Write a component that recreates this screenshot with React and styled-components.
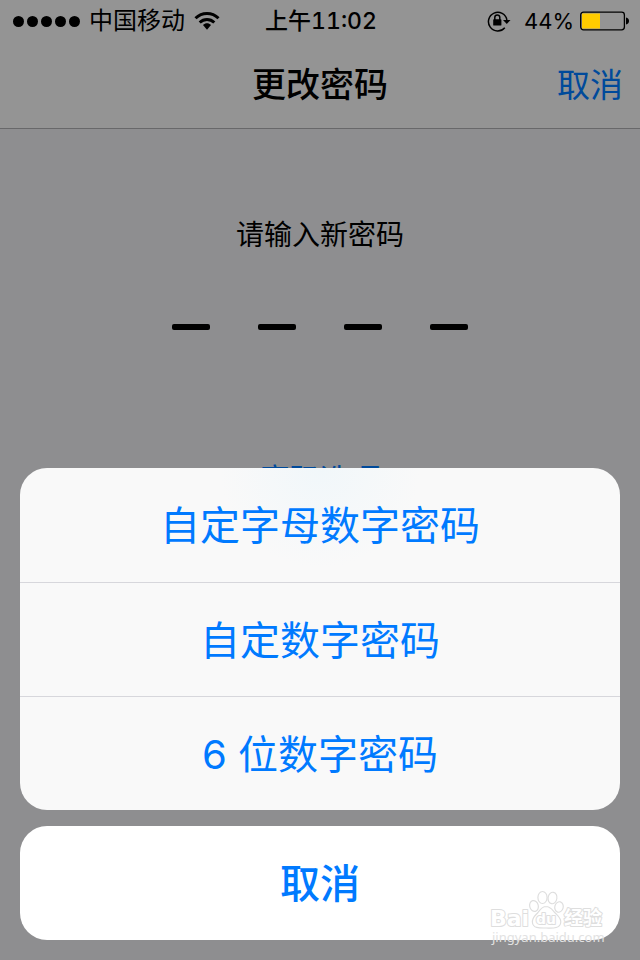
import React from "react";
import styled, { createGlobalStyle } from "styled-components";

const GlobalStyle = createGlobalStyle`
  *, *::before, *::after { box-sizing: border-box; }
  body {
    margin: 0;
    background: #8e8e90;
    color: #000;
    font-family: Inter, "Noto Sans CJK SC", sans-serif;
  }
  button {
    border: 0;
    margin: 0;
    padding: 0;
    background: transparent;
    font: inherit;
    cursor: pointer;
  }
`;

const Screen = styled.div`
  position: relative;
  min-height: 100vh;
  display: flex;
  flex-direction: column;
  overflow: hidden;
`;

const TopArea = styled.header`
  background: #949494;
  border-bottom: 1px solid #68686a;
`;

const StatusBar = styled.div`
  display: grid;
  grid-template-columns: 1fr auto 1fr;
  align-items: center;
  height: 42px;
  padding: 0 11px 0 13px;
  font-size: 24px;
  line-height: 42px;
`;

const StatusGroup = styled.div`
  display: flex;
  align-items: center;
  justify-content: ${(p) => (p.$end ? "flex-end" : "flex-start")};
  white-space: nowrap;
`;

const SignalDots = styled.div`
  display: flex;
  gap: 3px;
  margin-right: 9px;
`;

const Dot = styled.span`
  width: 11px;
  height: 11px;
  border-radius: 50%;
  background: #000;
`;

const Carrier = styled.span`
  margin-right: 9px;
`;

const Clock = styled.time`
  font-size: 23px;
  font-weight: 500;
  font-variant-numeric: tabular-nums;
`;

const Percent = styled.span`
  margin: 0 6px 0 13px;
  font-size: 22px;
`;

const NavBar = styled.div`
  display: grid;
  grid-template-columns: 1fr auto 1fr;
  align-items: center;
  height: 86px;
  padding: 0 17px;
`;

const Title = styled.h1`
  grid-column: 2;
  margin: 0;
  font-size: 34px;
  font-weight: 500;
  line-height: 48px;
`;

const NavButton = styled.button`
  && {
    justify-self: end;
    color: #004a9b;
    font-size: 33px;
    line-height: 48px;
  }
`;

const Main = styled.main`
  display: flex;
  flex-direction: column;
  align-items: center;
`;

const Prompt = styled.label`
  margin-top: 86px;
  font-size: 28px;
  line-height: 40px;
`;

const CodeField = styled.div`
  position: relative;
  display: flex;
  gap: 48px;
  margin-top: 69px;
`;

const Dash = styled.span`
  width: 38px;
  height: 6px;
  border-radius: 2px;
  background: #000;
`;

const CodeInput = styled.input`
  position: absolute;
  inset: -20px 0;
  width: 100%;
  border: 0;
  outline: 0;
  background: transparent;
  color: transparent;
  caret-color: transparent;
`;

const OptionsButton = styled.button`
  && {
    margin-top: 127px;
    color: #004a9b;
    font-size: 30px;
    line-height: 44px;
  }
`;

const Sheet = styled.div`
  position: absolute;
  inset: auto 20px 20px;
  display: flex;
  flex-direction: column;
  gap: 16px;
`;

const Group = styled.div`
  display: flex;
  flex-direction: column;
  overflow: hidden;
  border-radius: 27px;
  background: ${(p) => (p.$solid ? "#fff" : "radial-gradient(circle at 50% 0, #f1f7fa 0, #f9f9f9 100px)")};
`;

const Action = styled.button`
  && {
    height: 114px;
    padding-top: 2px;
    color: #007aff;
    font-size: 40px;
    font-weight: ${(p) => (p.$strong ? 500 : 400)};
    line-height: 58px;
  }
  & + & {
    border-top: 1px solid #d7d7dc;
  }
`;

const Watermark = styled.svg`
  position: absolute;
  right: 32px;
  bottom: 12px;
  width: 120px;
  height: 60px;
  pointer-events: none;
`;

const WifiIcon = () => (
  <svg width="26" height="20" viewBox="0 0 26 20" fill="none" stroke="#000" strokeWidth="3" aria-label="Wi-Fi">
    <path d="M1.5 7.3C8 .9 18 .9 24.5 7.3" />
    <path d="M5.7 11.5c4.2-4 10.4-4 14.6 0" />
    <path d="M9 14c2.4-2.2 5.6-2.2 8 0l-4 4.7z" fill="#000" stroke="none" />
  </svg>
);

const RotationLockIcon = () => (
  <svg width="24" height="22" viewBox="0 0 24 22" fill="none" stroke="#000" aria-label="方向锁定">
    <path d="M17.8 17.7A9.3 9.3 0 1 1 19.9 10" strokeWidth="1.5" />
    <path d="M16 10h7.5l-3.7 4z" fill="#000" stroke="none" />
    <rect x="6.2" y="9.3" width="8.2" height="6.3" rx=".7" fill="#000" stroke="none" />
    <path d="M7.8 10V7.4a2.5 2.5 0 0 1 5 0V10" strokeWidth="1.5" />
  </svg>
);

const BatteryIcon = () => (
  <svg width="49" height="20" viewBox="0 0 49 20" aria-label="电池">
    <rect x=".7" y="1.2" width="43.7" height="17.6" rx="2.8" fill="none" stroke="#000" strokeWidth="1.3" />
    <rect x="2" y="2.5" width="18" height="15" fill="#ffcc00" />
    <path d="M46 6.5c4 .8 4 6.2 0 7z" fill="#000" />
  </svg>
);

const WatermarkLogo = () => (
  <Watermark viewBox="0 0 120 60" aria-label="Baidu 经验">
    <g fill="#fff" stroke="#dedede" strokeWidth="1.2">
      <ellipse cx="46" cy="18" rx="4.3" ry="5.5" transform="rotate(-15 46 18)" />
      <ellipse cx="54.5" cy="9.5" rx="4.6" ry="6" />
      <ellipse cx="64.5" cy="10" rx="4.4" ry="5.8" transform="rotate(10 64.5 10)" />
      <ellipse cx="71" cy="19" rx="4.2" ry="5.3" transform="rotate(15 71 19)" />
      <path d="M58 18.5c-4 0-5.6 3-8 6-3 3.2-6.5 5.5-5.5 10.5 1 5.6 7.5 5 13.5 5s13.5 1 14.7-5c1-5-3-7.3-6-10.5-2.6-3-4.5-6-8.7-6z" />
    </g>
    <g fontFamily="'DejaVu Sans', 'Noto Sans CJK SC', sans-serif" fontWeight="700" fill="#fff" stroke="#dedede" strokeWidth="2" paintOrder="stroke" strokeLinejoin="round">
      <text x="2" y="38" fontSize="22">Bai</text>
      <text x="48" y="36" fontSize="14">du</text>
      <text x="76" y="37" fontSize="19" fontFamily="'Noto Sans CJK SC', sans-serif">经验</text>
    </g>
    <text x="4" y="54" fontSize="13" fontFamily="'Noto Sans', sans-serif" fill="#e2e2e2">
      jingyan.baidu.com
    </text>
  </Watermark>
);

const ACTIONS = ["自定字母数字密码", "自定数字密码", "6 位数字密码"];

export default function App() {
  return (
    <>
      <GlobalStyle />
      <Screen lang="zh-CN">
        <TopArea>
          <StatusBar>
            <StatusGroup>
              <SignalDots>
                {[0, 1, 2, 3, 4].map((n) => <Dot key={n} />)}
              </SignalDots>
              <Carrier>中国移动</Carrier>
              <WifiIcon />
            </StatusGroup>
            <Clock>上午11:02</Clock>
            <StatusGroup $end>
              <RotationLockIcon />
              <Percent>44%</Percent>
              <BatteryIcon />
            </StatusGroup>
          </StatusBar>
          <NavBar>
            <Title>更改密码</Title>
            <NavButton type="button">取消</NavButton>
          </NavBar>
        </TopArea>
        <Main>
          <Prompt htmlFor="passcode">请输入新密码</Prompt>
          <CodeField>
            {[0, 1, 2, 3].map((n) => <Dash key={n} />)}
            <CodeInput id="passcode" type="password" inputMode="numeric" maxLength={4} />
          </CodeField>
          <OptionsButton type="button">密码选项</OptionsButton>
        </Main>
        <Sheet role="dialog" aria-label="密码选项">
          <Group>
            {ACTIONS.map((label) => <Action key={label} type="button">{label}</Action>)}
          </Group>
          <Group $solid>
            <Action type="button" $strong>取消</Action>
          </Group>
        </Sheet>
        <WatermarkLogo />
      </Screen>
    </>
  );
}
